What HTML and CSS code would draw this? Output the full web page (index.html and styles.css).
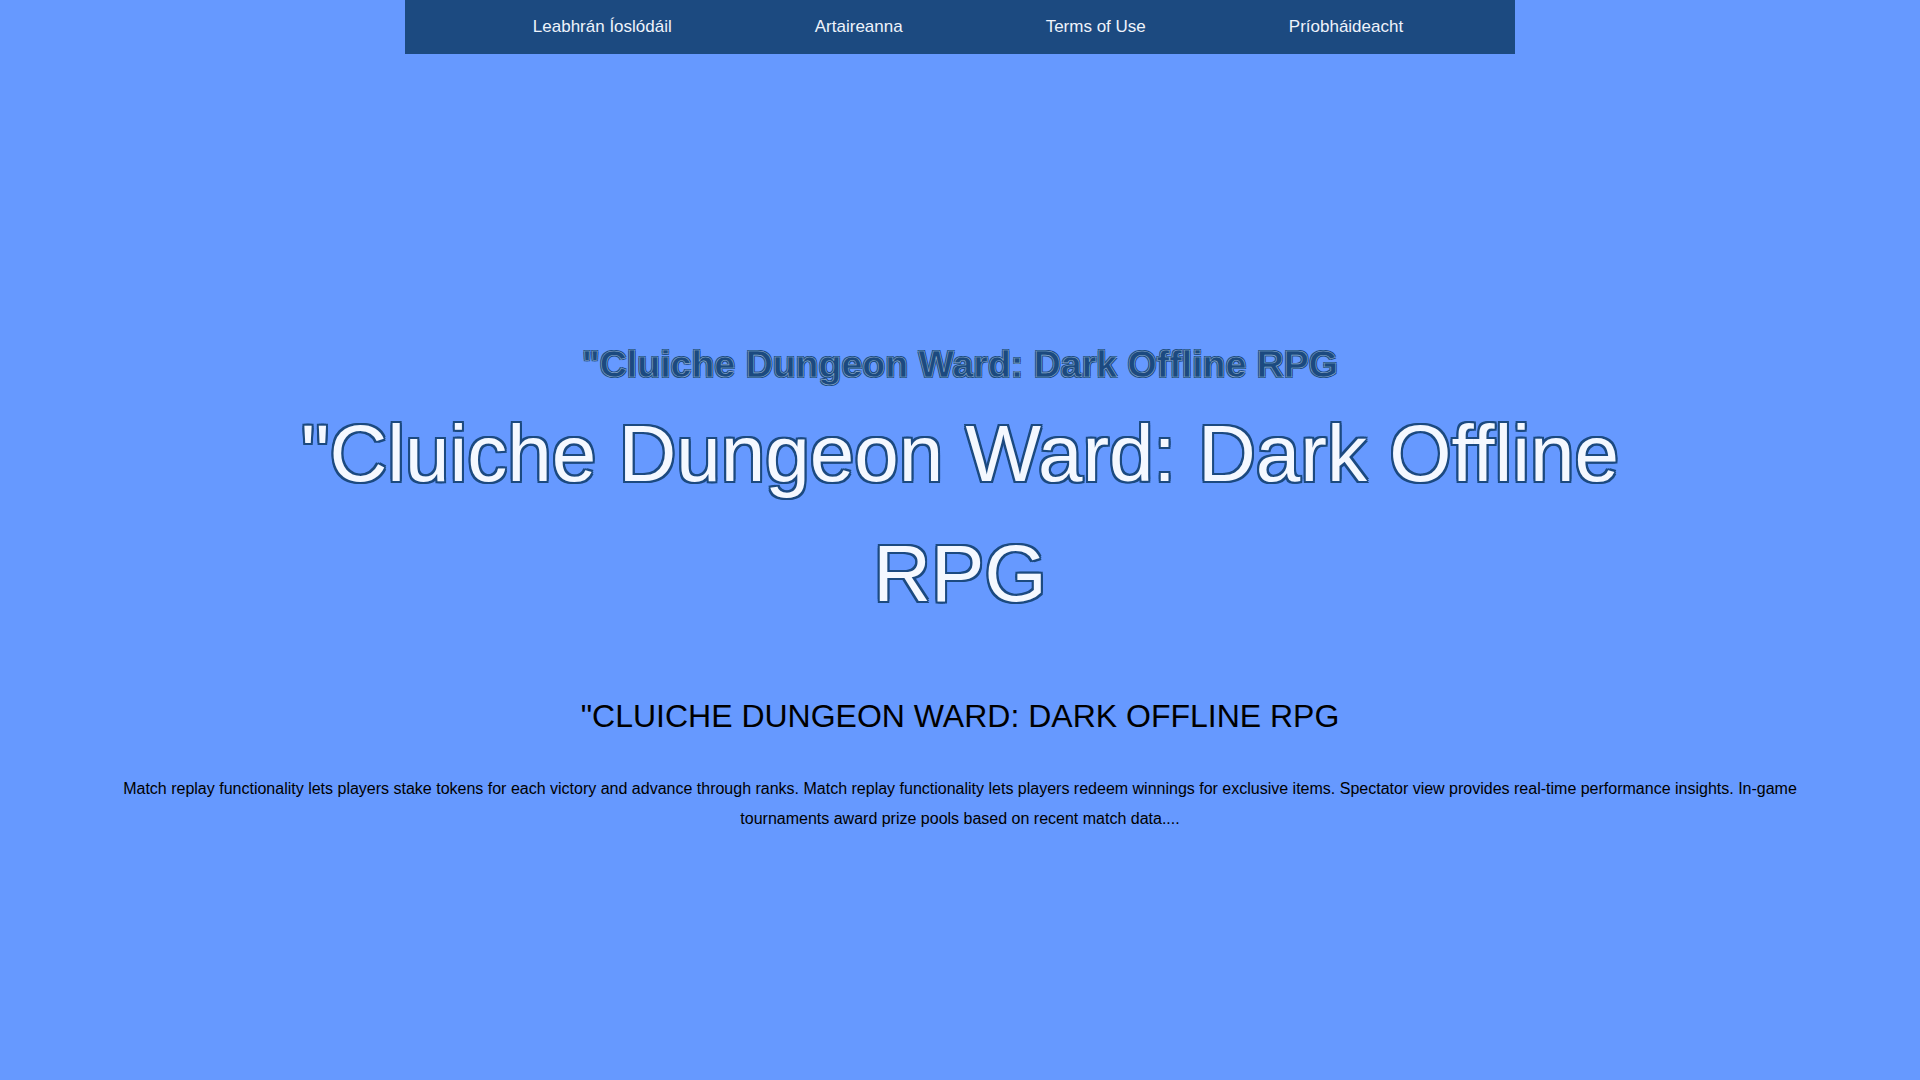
FILE: index.html
```html
<!DOCTYPE html>
<html lang="ga">
<head>
    <meta charset="UTF-8">
    <meta name="viewport" content="width=device-width, initial-scale=1.0">
    <title>"Cluiche Dungeon Ward: Dark Offline RPG</title>
    <link rel="stylesheet" href="styles.css">
</head>
<body>
    <nav class="top-nav">
        <ul class="nav-list">
            <li><a href="#" class="nav-link">Leabhrán Íoslódáil</a></li>
            <li><a href="#" class="nav-link">Artaireanna</a></li>
            <li><a href="#" class="nav-link">Terms of Use</a></li>
            <li><a href="#" class="nav-link">Príobháideacht</a></li>
        </ul>
    </nav>

    <main class="content">
        <h1 class="title-small">"Cluiche Dungeon Ward: Dark Offline RPG</h1>
        <h1 class="title-big">"Cluiche Dungeon Ward: Dark Offline RPG</h1>

        <h2 class="subtitle">"Cluiche Dungeon Ward: Dark Offline RPG</h2>

        <p class="intro">Match replay functionality lets players stake tokens for each victory and advance through ranks. Match replay functionality lets players redeem winnings for exclusive items. Spectator view provides real-time performance insights. In-game tournaments award prize pools based on recent match data....</p>
    </main>
</body>
</html>
```

FILE: styles.css
```css
body {
    font-family: "Liberation Sans", Arial, sans-serif;
    background-color: #6699ff;
    color: #000000;
    margin: 0;
}
.top-nav {
    width: 1110px;
    height: 54px;
    margin: 0 auto;
    background-color: #1c4a80;
}
.nav-list {
    display: flex;
    justify-content: center;
    align-items: center;
    gap: 143px;
    height: 100%;
    list-style: none;
    margin: 0;
    padding: 0 0 0 16px;
}
.nav-link {
    color: #eef3fb;
    font-size: 17px;
    text-decoration: none;
}
.content {
    max-width: 1720px;
    margin: 0 auto;
    text-align: center;
}
.title-small {
    margin: 289px 0 0;
    font-size: 37.5px;
    font-weight: bold;
    color: #1c4a80;
    -webkit-text-stroke: 0.6px rgba(220, 235, 255, 0.6);
    text-shadow: 1px 1px 0 #1c4a80, -1px -1px 0 #1c4a80, 1px -1px 0 #1c4a80, -1px 1px 0 #1c4a80;
}
.title-big {
    max-width: 1400px;
    margin: 8px auto 0;
    font-size: 80px;
    font-weight: normal;
    line-height: 120px;
    color: #f4f8ff;
    text-shadow: 2px 0 0 #1c4a80, -2px 0 0 #1c4a80, 0 2px 0 #1c4a80, 0 -2px 0 #1c4a80,
        2px 2px 0 #1c4a80, -2px -2px 0 #1c4a80, 2px -2px 0 #1c4a80, -2px 2px 0 #1c4a80;
}
.subtitle {
    margin: 64px 0 0;
    font-size: 32px;
    font-weight: normal;
    text-transform: uppercase;
}
.intro {
    margin: 39px 0 0;
    font-size: 16px;
    line-height: 30px;
}
```
